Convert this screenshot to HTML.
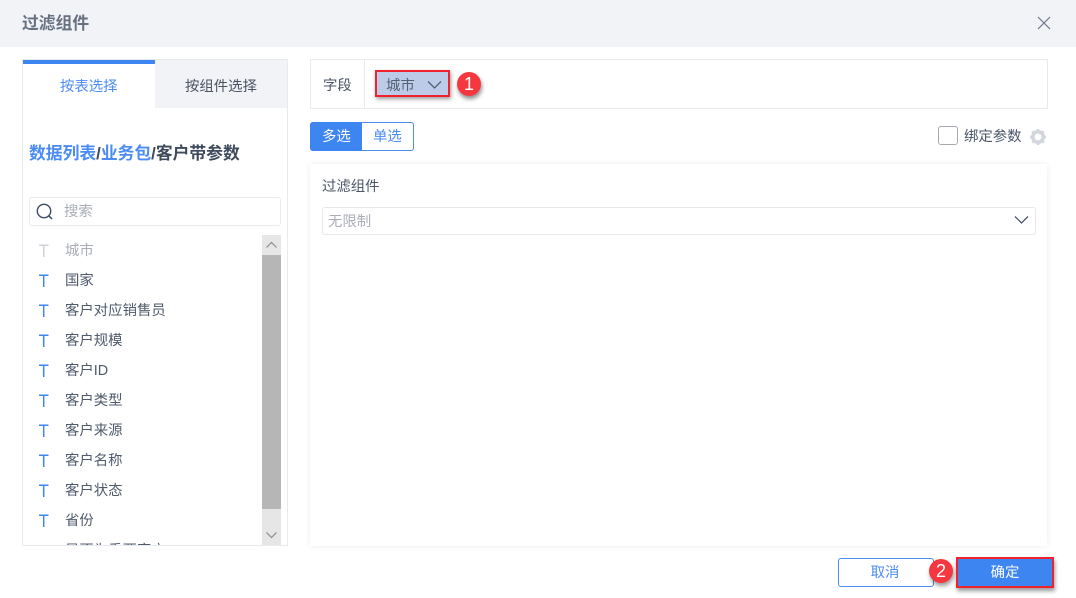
<!DOCTYPE html>
<html lang="zh">
<head>
<meta charset="utf-8">
<title>过滤组件</title>
<style>
html,body{margin:0;padding:0;width:1076px;height:598px;overflow:hidden;background:#fff}
body{position:relative;font-family:"Liberation Sans","Noto Sans CJK SC",sans-serif;font-size:14.4px;color:#4b5568}
div,span,svg{position:absolute;box-sizing:border-box}
.t{white-space:nowrap;line-height:20px}
.row{left:65px;white-space:nowrap;line-height:20px;color:#4f5a6c;font-size:14.4px}
.T{left:38px;width:12px;height:13px}
</style>
</head>
<body>
<div style="left:0;top:0;width:1076px;height:47px;background:#f1f3f7"></div>
<div class="t" style="left:22px;top:14px;font-size:16.8px;font-weight:bold;color:#667080">过滤组件</div>
<svg style="left:1037px;top:16px" width="14" height="14" viewBox="0 0 14 14"><path d="M1 1L13 13M13 1L1 13" stroke="#6d7786" stroke-width="1.2" fill="none"/></svg>

<!-- left panel -->
<div style="left:22px;top:59px;width:266px;height:487px;border:1px solid #e8eaee;background:#fff;overflow:hidden"></div>
<div style="left:23px;top:60px;width:132px;height:4px;background:#3d85f0"></div>
<div style="left:155px;top:60px;width:132px;height:48px;background:#f1f3f7"></div>
<div class="t" style="left:60px;top:77px;color:#4c8bf5">按表选择</div>
<div class="t" style="left:185px;top:77px;color:#4b5362">按组件选择</div>
<div class="t" style="left:29px;top:144px;font-size:16.8px;font-weight:bold;color:#3f4a5c"><span style="position:static;color:#4a8cf3">数据列表</span>/<span style="position:static;color:#4a8cf3">业务包</span>/客户带参数</div>

<div style="left:29px;top:197px;width:252px;height:29px;border:1px solid #e9ebee;border-radius:3px"></div>
<svg style="left:35px;top:202px" width="19" height="19" viewBox="0 0 19 19"><circle cx="9" cy="9" r="6.7" stroke="#3f4d63" stroke-width="1.4" fill="none"/><path d="M13.8 13.8L17 17" stroke="#3f4d63" stroke-width="1.5" fill="none"/></svg>
<div class="t" style="left:64px;top:202px;color:#a9aeb6">搜索</div>

<!-- list -->
<div style="left:23px;top:235px;width:239px;height:310px;overflow:hidden">
  <svg class="T" style="left:15px;top:9px" viewBox="0 0 12 13"><path d="M1 1.2H10.5M5.7 1.2V13" stroke="#cfd2d8" stroke-width="1.5" fill="none"/></svg>
  <div class="row" style="left:42px;top:6px;color:#a9aeb6">城市</div>
  <svg class="T" style="left:15px;top:39px" viewBox="0 0 12 13"><path d="M1 1.2H10.5M5.7 1.2V13" stroke="#3d85f0" stroke-width="1.5" fill="none"/></svg>
  <div class="row" style="left:42px;top:36px">国家</div>
  <svg class="T" style="left:15px;top:69px" viewBox="0 0 12 13"><path d="M1 1.2H10.5M5.7 1.2V13" stroke="#3d85f0" stroke-width="1.5" fill="none"/></svg>
  <div class="row" style="left:42px;top:66px">客户对应销售员</div>
  <svg class="T" style="left:15px;top:99px" viewBox="0 0 12 13"><path d="M1 1.2H10.5M5.7 1.2V13" stroke="#3d85f0" stroke-width="1.5" fill="none"/></svg>
  <div class="row" style="left:42px;top:96px">客户规模</div>
  <svg class="T" style="left:15px;top:129px" viewBox="0 0 12 13"><path d="M1 1.2H10.5M5.7 1.2V13" stroke="#3d85f0" stroke-width="1.5" fill="none"/></svg>
  <div class="row" style="left:42px;top:126px">客户ID</div>
  <svg class="T" style="left:15px;top:159px" viewBox="0 0 12 13"><path d="M1 1.2H10.5M5.7 1.2V13" stroke="#3d85f0" stroke-width="1.5" fill="none"/></svg>
  <div class="row" style="left:42px;top:156px">客户类型</div>
  <svg class="T" style="left:15px;top:189px" viewBox="0 0 12 13"><path d="M1 1.2H10.5M5.7 1.2V13" stroke="#3d85f0" stroke-width="1.5" fill="none"/></svg>
  <div class="row" style="left:42px;top:186px">客户来源</div>
  <svg class="T" style="left:15px;top:219px" viewBox="0 0 12 13"><path d="M1 1.2H10.5M5.7 1.2V13" stroke="#3d85f0" stroke-width="1.5" fill="none"/></svg>
  <div class="row" style="left:42px;top:216px">客户名称</div>
  <svg class="T" style="left:15px;top:249px" viewBox="0 0 12 13"><path d="M1 1.2H10.5M5.7 1.2V13" stroke="#3d85f0" stroke-width="1.5" fill="none"/></svg>
  <div class="row" style="left:42px;top:246px">客户状态</div>
  <svg class="T" style="left:15px;top:279px" viewBox="0 0 12 13"><path d="M1 1.2H10.5M5.7 1.2V13" stroke="#3d85f0" stroke-width="1.5" fill="none"/></svg>
  <div class="row" style="left:42px;top:276px">省份</div>
  <div class="row" style="left:42px;top:306px">是否为重要客户</div>
</div>
<!-- scrollbar -->
<div style="left:262px;top:235px;width:19px;height:310px;background:#e6e6e6"></div>
<div style="left:262px;top:255px;width:19px;height:254px;background:#b6b6b6"></div>
<svg style="left:266px;top:241px" width="11" height="8" viewBox="0 0 11 8"><path d="M.5 6.5L5.5 1.5L10.5 6.5" stroke="#8c8c8c" stroke-width="1.2" fill="none"/></svg>
<svg style="left:266px;top:531px" width="11" height="8" viewBox="0 0 11 8"><path d="M.5 1.5L5.5 6.5L10.5 1.5" stroke="#8c8c8c" stroke-width="1.2" fill="none"/></svg>

<!-- field row -->
<div style="left:310px;top:59px;width:738px;height:50px;border:1px solid #e8eaee"></div>
<div style="left:364px;top:60px;width:1px;height:48px;background:#e8eaee"></div>
<div class="t" style="left:323px;top:76px;color:#4b5568">字段</div>
<div style="left:375px;top:70px;width:75px;height:27px;background:#bccbe8;border:2px solid #f0222e;box-shadow:1px 2px 4px rgba(0,0,0,.4)"></div>
<div class="t" style="left:386px;top:76px;color:#566073">城市</div>
<svg style="left:427px;top:80px" width="15" height="10" viewBox="0 0 15 10"><path d="M1 1.5L7.5 8L14 1.5" stroke="#566073" stroke-width="1.3" fill="none"/></svg>
<div style="left:457px;top:72px;width:24px;height:24px;border-radius:50%;background:#f5373f;box-shadow:1px 3px 4px rgba(0,0,0,.45);color:#fff;font-size:18px;line-height:24px;text-align:center">1</div>

<!-- segmented -->
<div style="left:310px;top:122px;width:104px;height:29px;border:1px solid #4a8cf3;border-radius:3px;background:#fff"></div>
<div style="left:310px;top:122px;width:52px;height:29px;background:#3d85f0;border-radius:3px 0 0 3px"></div>
<div class="t" style="left:322px;top:127px;color:#fff">多选</div>
<div class="t" style="left:373px;top:127px;color:#4a8cf3">单选</div>

<!-- bind -->
<div style="left:938px;top:126px;width:20px;height:19px;border:1px solid #a4a9b2;border-radius:3px;background:#fff"></div>
<div class="t" style="left:964px;top:127px;color:#4b5568">绑定参数</div>
<svg style="left:1029px;top:128px" width="18" height="18" viewBox="0 0 18 18"><circle cx="9" cy="9" r="5.2" stroke="#d3d6dc" stroke-width="3.6" fill="none"/><path d="M9 1V17M1 9H17M3.3 3.3L14.7 14.7M14.7 3.3L3.3 14.7" stroke="#d3d6dc" stroke-width="2.6" fill="none" stroke-dasharray="2.6 10.8 2.6 0"/></svg>

<!-- card -->
<div style="left:310px;top:164px;width:737px;height:382px;background:#fff;box-shadow:0 0 6px rgba(0,0,0,.08)"></div>
<div class="t" style="left:322px;top:177px;color:#4b5568">过滤组件</div>
<div style="left:322px;top:207px;width:714px;height:28px;border:1px solid #e6e8eb;border-radius:3px;background:#fff"></div>
<div class="t" style="left:328px;top:212px;color:#a9aeb6">无限制</div>
<svg style="left:1014px;top:215px" width="15" height="10" viewBox="0 0 15 10"><path d="M1 1.5L7.5 8L14 1.5" stroke="#4b5568" stroke-width="1.3" fill="none"/></svg>

<!-- buttons -->
<div style="left:838px;top:558px;width:96px;height:29px;border:1px solid #4a8cf3;border-radius:3px;background:#fff;color:#4a8cf3;text-align:center;line-height:29px;font-size:14.4px;padding-right:2px">取消</div>
<div style="left:929px;top:559px;width:24px;height:24px;border-radius:50%;background:#f5373f;box-shadow:1px 3px 4px rgba(0,0,0,.4);color:#fff;font-size:18px;line-height:24px;text-align:center">2</div>
<div style="left:956px;top:557px;width:98px;height:31px;border:2px solid #f0222e;background:#3d85f0;box-shadow:1px 3px 4px rgba(0,0,0,.4);color:#fff;text-align:center;line-height:29px;font-size:14.4px">确定</div>
</body>
</html>
